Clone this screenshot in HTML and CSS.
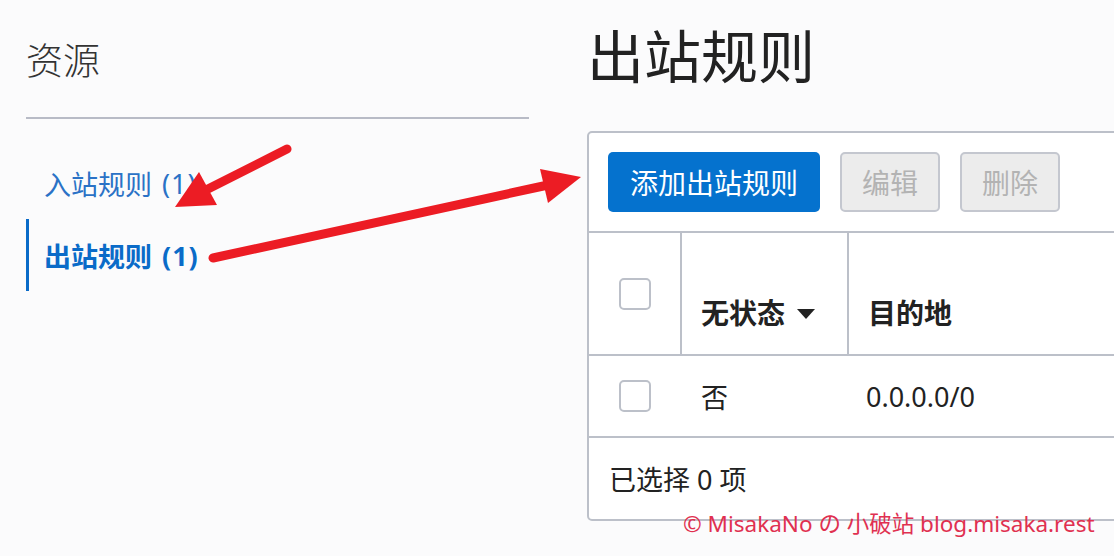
FILE: index.html
```html
<!DOCTYPE html>
<html lang="zh-CN">
<head>
    <meta charset="UTF-8">
    <title>出站规则</title>
    <link rel="stylesheet" href="styles.css">
</head>
<body>
    <div class="sidebar">
        <h3 class="side-title">资源</h3>
        <div class="nav">
            <a class="nav-item" href="#">入站规则 <span class="count">(1)</span></a>
            <a class="nav-item active" href="#">出站规则 <span class="count">(1)</span></a>
        </div>
    </div>

    <div class="main">
        <h1 class="page-title">出站规则</h1>
        <div class="card">
            <div class="toolbar">
                <button class="btn primary">添加出站规则</button>
                <button class="btn disabled">编辑</button>
                <button class="btn disabled">删除</button>
            </div>
            <div class="grid head">
                <div class="cell check"><span class="box"></span></div>
                <div class="cell th">无状态
                    <svg class="caret" width="18" height="10" viewBox="0 0 18 10"><path d="M0 0h18L9 10z" fill="#222"/></svg>
                </div>
                <div class="cell th">目的地</div>
            </div>
            <div class="grid row">
                <div class="cell check"><span class="box"></span></div>
                <div class="cell td">否</div>
                <div class="cell td">0.0.0.0/0</div>
            </div>
            <div class="footer">已选择 0 项</div>
        </div>
    </div>

    <div class="watermark">© MisakaNo の 小破站 blog.misaka.rest</div>

    <svg class="arrows" width="1114" height="556" viewBox="0 0 1114 556">
        <line x1="287" y1="149" x2="200" y2="193" stroke="#ec1c24" stroke-width="9" stroke-linecap="round"/>
        <polygon points="175,207 199,172 217,205" fill="#ec1c24"/>
        <line x1="213" y1="258" x2="548" y2="185" stroke="#ec1c24" stroke-width="9" stroke-linecap="round"/>
        <polygon points="581,177 540,169 548,203" fill="#ec1c24"/>
    </svg>
</body>
</html>
```

FILE: styles.css
```css
body { margin: 0; background: #fbfbfc; font-family: "Noto Sans", "Noto Sans CJK SC", sans-serif; color: #222; display: flex; width: 1114px; height: 556px; overflow: hidden; position: relative; }

.sidebar { width: 503px; padding-left: 26px; flex-shrink: 0; }
.side-title { margin: 0; padding-top: 39px; padding-bottom: 34px; font-size: 37px; line-height: 44px; font-weight: 300; color: #333; border-bottom: 2px solid #b8bbc6; }
.nav { padding-top: 28px; }
.nav-item { display: flex; align-items: center; gap: 10px; height: 72px; padding-left: 18px; font-size: 27px; color: #2a72c6; text-decoration: none; }
.nav-item.active { border-left: 3px solid #0a6bc8; padding-left: 15px; font-weight: bold; color: #0a6bc8; }
.count { letter-spacing: 1px; }

.main { margin-left: 58px; flex: 1; min-width: 0; }
.page-title { margin: 0; padding-top: 22px; font-size: 57px; line-height: 68px; font-weight: 400; color: #222; }

.card { margin-top: 41px; width: 600px; background: #fff; border: 2px solid #bcc0c9; border-radius: 5px; }
.toolbar { display: flex; gap: 20px; padding: 19px 19px; border-bottom: 2px solid #bcc0c9; }
.btn { height: 60px; padding: 0; font-family: inherit; font-size: 28px; border-radius: 5px; border: 2px solid transparent; }
.btn.primary { width: 212px; background: #0572ce; color: #fff; }
.btn.disabled { width: 100px; background: #ececec; border-color: #c4c7cf; color: #b3b3b3; }

.grid { display: grid; grid-template-columns: 91px 167px 1fr; border-bottom: 2px solid #bcc0c9; }
.head { height: 121px; }
.row { height: 80px; }
.cell { display: flex; align-items: center; }
.head .cell + .cell { border-left: 2px solid #bcc0c9; }
.check { justify-content: center; }
.box { width: 28px; height: 28px; border: 2px solid #bcc0c9; border-radius: 5px; background: #fff; }
.th { align-items: flex-end; padding: 0 0 22px 19px; font-size: 28px; font-weight: bold; }
.caret { margin: 0 0 13px 12px; }
.td { padding-left: 21px; font-size: 27px; }
.row .td + .td { padding-left: 19px; }

.footer { height: 81px; display: flex; align-items: center; padding-left: 20px; font-size: 27px; }

.watermark { position: absolute; left: 683px; top: 506px; font-size: 22.5px; color: #e03050; white-space: nowrap; }
.arrows { position: absolute; left: 0; top: 0; pointer-events: none; }
```
